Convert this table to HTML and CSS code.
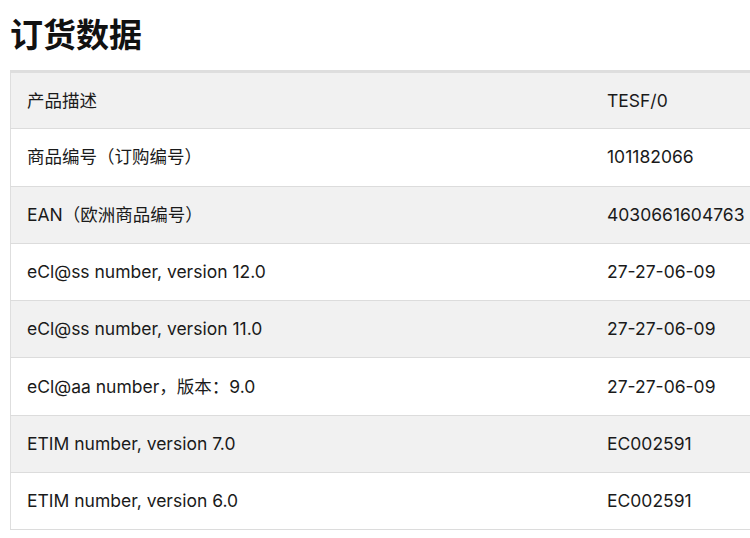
FILE: index.html
```html
<!DOCTYPE html>
<html lang="zh">
<head>
<meta charset="utf-8">
<link rel="stylesheet" href="styles.css">
</head>
<body>
<main class="page">
  <h1 class="title">订货数据</h1>
  <div class="table-wrap">
    <table class="data">
      <tbody>
        <tr><td class="label">产品描述</td><td class="value">TESF/0</td></tr>
        <tr><td class="label">商品编号（订购编号）</td><td class="value">101182066</td></tr>
        <tr><td class="label">EAN（欧洲商品编号）</td><td class="value">4030661604763</td></tr>
        <tr><td class="label">eCl@ss number, version 12.0</td><td class="value">27-27-06-09</td></tr>
        <tr><td class="label">eCl@ss number, version 11.0</td><td class="value">27-27-06-09</td></tr>
        <tr><td class="label">eCl@aa number，版本：9.0</td><td class="value">27-27-06-09</td></tr>
        <tr><td class="label">ETIM number, version 7.0</td><td class="value">EC002591</td></tr>
        <tr><td class="label">ETIM number, version 6.0</td><td class="value">EC002591</td></tr>
      </tbody>
    </table>
  </div>
</main>
</body>
</html>
```
FILE: styles.css
```css
html, body {
  margin: 0;
  padding: 0;
  background: #fff;
  overflow: hidden;
}
body {
  font-family: "Inter", "Noto Sans CJK SC", sans-serif;
  color: #1a1a1a;
}
.page {
  padding: 10px 0 0 10px;
  width: 900px;
}
.title {
  margin: 0 0 14px 0;
  font-size: 33px;
  line-height: 46px;
  font-weight: 700;
  font-family: "Noto Sans CJK SC", sans-serif;
  color: #111;
}
.table-wrap {
  width: 860px;
}
.data {
  width: 100%;
  border-collapse: collapse;
  border-top: 3px solid #dedede;
  border-left: 1px solid #dedede;
  font-size: 17.5px;
  line-height: 24px;
}
.data tr {
  height: 57.3px;
  border-bottom: 1px solid #dcdcdc;
}
.data tr:nth-child(odd) {
  background: #f1f1f1;
}
.data tr:nth-child(even) {
  background: #fff;
}
.data td {
  padding: 0 16px;
  vertical-align: middle;
}
.data .label {
  width: 548px;
}
.data .value {
  padding-left: 16px;
}
```
